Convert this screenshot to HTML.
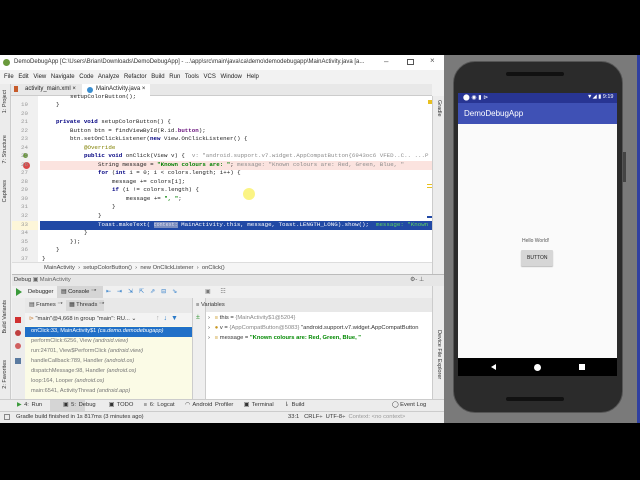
<!DOCTYPE html>
<html><head><meta charset="utf-8"><style>
*{margin:0;padding:0;box-sizing:border-box}
body{width:640px;height:480px;background:#000;position:relative;overflow:hidden;font-family:"Liberation Sans",sans-serif;font-size:6px;color:#222}
.a{position:absolute;white-space:nowrap}
.m{font-family:"Liberation Mono",monospace;font-size:5.8px}
.ln{position:absolute;left:12px;width:16px;text-align:right;color:#999;font-family:"Liberation Mono",monospace;font-size:5.8px}
.kw{color:#000080;font-weight:bold}
.st{color:#008000;font-weight:bold}
.gr{color:#8c8c8c}
.fr{position:absolute;left:31px;color:#777;font-size:5.6px;font-style:normal}
.fr i{font-style:italic}
</style></head><body>
<!-- IDE window -->
<div class="a" style="left:0;top:55px;width:444px;height:368px;background:#f2f2f2"></div>
<!-- title -->
<div class="a" style="left:0;top:55px;width:444px;height:15px;background:#fff"></div>
<div class="a" style="left:3px;top:59px;width:7px;height:7px;border-radius:50%;background:#6a9a3c"></div>
<div class="a" style="left:14px;top:59px;font-size:6px;color:#333">DemoDebugApp [C:\Users\Brian\Downloads\DemoDebugApp] - ...\app\src\main\java\ca\demo\demodebugapp\MainActivity.java [a...</div>
<div class="a" style="left:384px;top:57px;font-size:8px;color:#555">–</div>
<div class="a" style="left:407px;top:59px;width:7px;height:6px;border:1px solid #555"></div>
<div class="a" style="left:430px;top:56px;font-size:8px;color:#555">×</div>
<!-- menu -->
<div class="a" style="left:4px;top:74px;font-size:6px;color:#222;word-spacing:3px">File Edit View Navigate Code Analyze Refactor Build Run Tools VCS Window Help</div>
<!-- tabs -->
<div class="a" style="left:11px;top:84px;width:421px;height:12px;background:#e8e8e8;border-bottom:1px solid #ccc"></div>
<div class="a" style="left:14px;top:86px;width:4px;height:6px;background:#c75b2a"></div>
<div class="a" style="left:25px;top:86px;font-size:6px">activity_main.xml ×</div>
<div class="a" style="left:82px;top:84px;width:68px;height:12px;background:#fff"></div>
<div class="a" style="left:87px;top:87px;width:6px;height:6px;border-radius:50%;background:#3a8ed0"></div>
<div class="a" style="left:96px;top:86px;font-size:6px">MainActivity.java ×</div>
<!-- left strip -->
<div class="a" style="left:0;top:84px;width:11px;height:325px;background:#ececec;border-right:1px solid #ccc"></div>
<div class="a" style="left:2px;top:90px;font-size:5.5px;writing-mode:vertical-rl;transform:rotate(180deg);color:#333">1: Project</div>
<div class="a" style="left:2px;top:135px;font-size:5.5px;writing-mode:vertical-rl;transform:rotate(180deg);color:#333">7: Structure</div>
<div class="a" style="left:2px;top:180px;font-size:5.5px;writing-mode:vertical-rl;transform:rotate(180deg);color:#333">Captures</div>
<div class="a" style="left:2px;top:300px;font-size:5.5px;writing-mode:vertical-rl;transform:rotate(180deg);color:#333">Build Variants</div>
<div class="a" style="left:2px;top:360px;font-size:5.5px;writing-mode:vertical-rl;transform:rotate(180deg);color:#333">2: Favorites</div>
<!-- right strip -->
<div class="a" style="left:432px;top:96px;width:12px;height:313px;background:#ececec;border-left:1px solid #ccc"></div>
<div class="a" style="left:436px;top:100px;font-size:5.5px;writing-mode:vertical-rl;color:#333">Gradle</div>
<div class="a" style="left:436px;top:330px;font-size:5.5px;writing-mode:vertical-rl;color:#333">Device File Explorer</div>
<!-- editor -->
<div class="a" style="left:12px;top:96px;width:420px;height:166px;background:#fff"></div>
<div class="a" style="left:12px;top:96px;width:26px;height:166px;background:#f0f0f0"></div>
<div class="a" style="left:40px;top:161px;width:392px;height:9px;background:#fbe3df"></div>
<div class="a" style="left:40px;top:221px;width:392px;height:9px;background:#2149a5"></div>
<div class="a" style="left:12px;top:221px;width:26px;height:9px;background:#fdf6d9"></div>
<div class="a" style="left:23px;top:162px;width:7px;height:7px;border-radius:50%;background:#d94a4a"></div>
<div class="a" style="left:23px;top:153px;width:5px;height:5px;background:#6a9a3c;border-radius:50%"></div>
<div class="a" style="left:428px;top:100px;width:4px;height:4px;background:#e8c020"></div>
<div class="a" style="left:427px;top:184px;width:5px;height:1px;background:#e8c020"></div>
<div class="a" style="left:427px;top:187px;width:5px;height:1px;background:#e8c020"></div>
<div class="a" style="left:427px;top:216px;width:5px;height:2px;background:#2149a5"></div>

<div class="ln" style="top:101px">19</div><div class="ln" style="top:110px">20</div><div class="ln" style="top:118px">21</div><div class="ln" style="top:127px">22</div><div class="ln" style="top:135px">23</div><div class="ln" style="top:144px">24</div><div class="ln" style="top:152px">25</div><div class="ln" style="top:161px">26</div><div class="ln" style="top:169px">27</div><div class="ln" style="top:178px">28</div><div class="ln" style="top:186px">29</div><div class="ln" style="top:195px">30</div><div class="ln" style="top:203px">31</div><div class="ln" style="top:212px">32</div><div class="ln" style="top:221px">33</div><div class="ln" style="top:229px">34</div><div class="ln" style="top:238px">35</div><div class="ln" style="top:246px">36</div><div class="ln" style="top:255px">37</div>

<div class="a m" style="left:70px;top:93px">setupColorButton();</div>
<div class="a m" style="left:56px;top:101px">}</div>
<div class="a m" style="left:56px;top:118px"><span class="kw">private void</span> setupColorButton() {</div>
<div class="a m" style="left:70px;top:127px">Button btn = findViewById(R.id.<span style="color:#660e7a;font-weight:bold">button</span>);</div>
<div class="a m" style="left:70px;top:135px">btn.setOnClickListener(<span class="kw">new</span> View.OnClickListener() {</div>
<div class="a m" style="left:84px;top:144px;color:#808000">@Override</div>
<div class="a m" style="left:84px;top:152px"><span class="kw">public void</span> onClick(View v) { <span class="gr">&nbsp;v: "android.support.v7.widget.AppCompatButton{6943oc6 VFED..C.. ...P</span></div>
<div class="a m" style="left:98px;top:161px">String message = <span class="st">"Known colours are: "</span>; <span class="gr">message: "Known colours are: Red, Green, Blue, "</span></div>
<div class="a m" style="left:98px;top:169px"><span class="kw">for</span> (<span class="kw">int</span> i = 0; i &lt; colors.length; i++) {</div>
<div class="a m" style="left:112px;top:178px">message += colors[i];</div>
<div class="a m" style="left:112px;top:186px"><span class="kw">if</span> (i != colors.length) {</div>
<div class="a m" style="left:126px;top:195px">message += <span class="st">", "</span>;</div>
<div class="a m" style="left:112px;top:203px">}</div>
<div class="a m" style="left:98px;top:212px">}</div>
<div class="a m" style="left:98px;top:221px;color:#fff">Toast.makeText( <span style="background:#7d8fbf;color:#dde;font-size:5px">context:</span> MainActivity.this, message, Toast.LENGTH_LONG).show(); <span style="color:#5fd35f">&nbsp;message: "Known</span></div>
<div class="a m" style="left:84px;top:229px">}</div>
<div class="a m" style="left:70px;top:238px">});</div>
<div class="a m" style="left:56px;top:246px">}</div>
<div class="a m" style="left:42px;top:255px">}</div>
<div class="a" style="left:243px;top:188px;width:12px;height:12px;border-radius:50%;background:rgba(250,240,80,.7)"></div>
<!-- breadcrumb -->
<div class="a" style="left:12px;top:262px;width:420px;height:12px;background:#f5f5f5;border-top:1px solid #ddd"></div>
<div class="a" style="left:44px;top:265px;font-size:5.8px;color:#444">MainActivity &nbsp;› &nbsp;setupColorButton() &nbsp;› &nbsp;new OnClickListener &nbsp;› &nbsp;onClick()</div>
<!-- debug header -->
<div class="a" style="left:12px;top:274px;width:432px;height:12px;background:#e6e6e6;border-top:1px solid #bbb"></div>
<div class="a" style="left:14px;top:277px;font-size:5.8px;color:#333">Debug <span style="color:#666">▣ MainActivity</span></div>
<div class="a" style="left:410px;top:276px;font-size:6px;color:#555">⚙- ⊥</div>
<!-- debugger toolbar -->
<div class="a" style="left:12px;top:286px;width:420px;height:12px;background:#f0f0f0"></div>
<div class="a" style="left:16px;top:288px;width:0;height:0;border-left:6px solid #3a9a3a;border-top:4px solid transparent;border-bottom:4px solid transparent"></div>
<div class="a" style="left:28px;top:289px;font-size:5.8px">Debugger</div>
<div class="a" style="left:57px;top:286px;width:46px;height:12px;background:#d5d5d5"></div>
<div class="a" style="left:61px;top:289px;font-size:5.8px">▤ Console ⁻*</div>
<div class="a" style="left:106px;top:288px;font-size:6px;color:#2a7ac8;letter-spacing:6px">⇤⇥⇲⇱⇗⊟⇘</div>
<div class="a" style="left:205px;top:288px;font-size:6px;color:#777;letter-spacing:4px">▣ ☷</div>
<!-- left debug strip -->
<div class="a" style="left:12px;top:298px;width:13px;height:101px;background:#ececec"></div>
<div class="a" style="left:15px;top:317px;width:6px;height:6px;background:#d03030"></div>
<div class="a" style="left:15px;top:330px;width:6px;height:6px;border-radius:50%;background:#c04040"></div>
<div class="a" style="left:15px;top:343px;width:6px;height:6px;border-radius:50%;background:#d06060"></div>
<div class="a" style="left:15px;top:358px;width:6px;height:6px;background:#5a7aa0"></div>
<!-- frames -->
<div class="a" style="left:25px;top:298px;width:167px;height:15px;background:#e8e8e8"></div>
<div class="a" style="left:66px;top:300px;width:38px;height:11px;background:#d8d8d8"></div>
<div class="a" style="left:29px;top:302px;font-size:5.8px;color:#333">▤ Frames ⁻*&nbsp;&nbsp;&nbsp; ▦ Threads ⁻*</div>
<div class="a" style="left:25px;top:313px;width:167px;height:13px;background:#f3f3f3"></div>
<div class="a" style="left:29px;top:316px;font-size:5.8px;color:#333"><span style="color:#c84">⊳</span> "main"@4,668 in group "main": RU... ⌄</div>
<div class="a" style="left:156px;top:315px;font-size:7px;color:#2a7ac8;letter-spacing:4px"><span style="color:#aaa">↑</span>↓▼</div>
<div class="a" style="left:25px;top:326px;width:167px;height:73px;background:#fbfbe6"></div>
<div class="a" style="left:25px;top:327px;width:167px;height:10px;background:#2170c8"></div>
<div class="a fr" style="top:328px;color:#fff">onClick:33, MainActivity$1 <i>(ca.demo.demodebugapp)</i></div>
<div class="a fr" style="top:338px">performClick:6256, View <i>(android.view)</i></div>
<div class="a fr" style="top:348px">run:24701, View$PerformClick <i>(android.view)</i></div>
<div class="a fr" style="top:358px">handleCallback:789, Handler <i>(android.os)</i></div>
<div class="a fr" style="top:368px">dispatchMessage:98, Handler <i>(android.os)</i></div>
<div class="a fr" style="top:378px">loop:164, Looper <i>(android.os)</i></div>
<div class="a fr" style="top:388px">main:6541, ActivityThread <i>(android.app)</i></div>
<!-- vertical toolbar -->
<div class="a" style="left:192px;top:298px;width:14px;height:101px;background:#efefef;border-left:1px solid #ccc;border-right:1px solid #ccc"></div>
<div class="a" style="left:196px;top:314px;font-size:7px;color:#3a9a3a">±</div>
<!-- variables -->
<div class="a" style="left:206px;top:298px;width:226px;height:14px;background:#e8e8e8"></div>
<div class="a" style="left:196px;top:302px;font-size:5.8px;color:#333">≡ Variables</div>
<div class="a" style="left:206px;top:312px;width:226px;height:87px;background:#fff"></div>
<div class="a" style="left:208px;top:315px;font-size:5.8px;color:#333">›&nbsp;&nbsp; <span style="color:#c8961e">≡</span> this = <span style="color:#888">{MainActivity$1@5204}</span></div>
<div class="a" style="left:208px;top:325px;font-size:5.8px;color:#333">›&nbsp;&nbsp; <span style="color:#c8961e">●</span> v = <span style="color:#888">{AppCompatButton@5083}</span> "android.support.v7.widget.AppCompatButton</div>
<div class="a" style="left:208px;top:335px;font-size:5.8px;color:#333">›&nbsp;&nbsp; <span style="color:#c8961e">≡</span> message = <span style="color:#080;font-weight:bold">"Known colours are: Red, Green, Blue, "</span></div>
<!-- bottom tool bar -->
<div class="a" style="left:0;top:399px;width:444px;height:12px;background:#ececec;border-top:1px solid #ccc"></div>
<div class="a" style="left:50px;top:400px;width:35px;height:11px;background:#d5d5d5"></div>
<div class="a" style="left:17px;top:402px;font-size:5.8px;color:#333;word-spacing:1px"><span style="color:#3a9a3a">▶</span> 4: Run &nbsp;&nbsp;&nbsp;&nbsp;&nbsp;&nbsp;&nbsp;▣ 5: Debug &nbsp;&nbsp;&nbsp;&nbsp;▣ TODO &nbsp;&nbsp;&nbsp;≡ 6: Logcat &nbsp;&nbsp;&nbsp;◠ Android Profiler &nbsp;&nbsp;&nbsp;▣ Terminal &nbsp;&nbsp;&nbsp;⇂ Build</div>
<div class="a" style="left:392px;top:402px;font-size:5.8px;color:#333">◯ Event Log</div>
<!-- status -->
<div class="a" style="left:0;top:411px;width:444px;height:12px;background:#ececec;border-top:1px solid #ccc"></div>
<div class="a" style="left:4px;top:414px;width:6px;height:6px;border:1px solid #888"></div>
<div class="a" style="left:16px;top:414px;font-size:5.8px;color:#333">Gradle build finished in 1s 817ms (3 minutes ago)</div>
<div class="a" style="left:288px;top:414px;font-size:5.8px;color:#333">33:1 &nbsp;&nbsp;CRLF÷ &nbsp;UTF-8÷ &nbsp;<span style="color:#999">Context: &lt;no context&gt;</span></div>
<!-- emulator -->
<div class="a" style="left:444px;top:55px;width:196px;height:368px;background:#7a7a7a"></div>
<div class="a" style="left:637px;top:55px;width:3px;height:368px;background:#3040a0"></div>
<div class="a" style="left:453px;top:61px;width:170px;height:352px;background:#2b2b2b;border-radius:22px;border:1px solid #555"></div>
<div class="a" style="left:506px;top:72px;width:58px;height:4px;background:#111;border-radius:2px"></div>
<div class="a" style="left:506px;top:397px;width:58px;height:4px;background:#111;border-radius:2px"></div>
<div class="a" style="left:623px;top:152px;width:3px;height:30px;background:#444"></div>
<div class="a" style="left:458px;top:93px;width:159px;height:10px;background:#283593"></div>
<div class="a" style="left:463px;top:94px;font-size:6px;color:#fff">⬤ ◉ ▮ ⊳</div>
<div class="a" style="left:587px;top:94px;font-size:5.5px;color:#fff">▼◢ ▮ 9:19</div>
<div class="a" style="left:458px;top:103px;width:159px;height:21px;background:#3f51b5"></div>
<div class="a" style="left:464px;top:109px;font-size:8px;color:#fff">DemoDebugApp</div>
<div class="a" style="left:458px;top:124px;width:159px;height:234px;background:#fafafa"></div>
<div class="a" style="left:522px;top:238px;font-size:5px;color:#555">Hello World!</div>
<div class="a" style="left:521px;top:250px;width:32px;height:16px;background:#d6d6d6;border-radius:1px;box-shadow:0 1px 1px #bbb"></div>
<div class="a" style="left:527px;top:255px;font-size:5px;color:#222">BUTTON</div>
<div class="a" style="left:458px;top:358px;width:159px;height:18px;background:#000"></div>
<div class="a" style="left:491px;top:364px;width:0;height:0;border-right:5px solid #fff;border-top:3.5px solid transparent;border-bottom:3.5px solid transparent"></div>
<div class="a" style="left:534px;top:364px;width:7px;height:7px;border-radius:50%;background:#fff"></div>
<div class="a" style="left:579px;top:364px;width:6px;height:6px;background:#fff"></div>
</body></html>
